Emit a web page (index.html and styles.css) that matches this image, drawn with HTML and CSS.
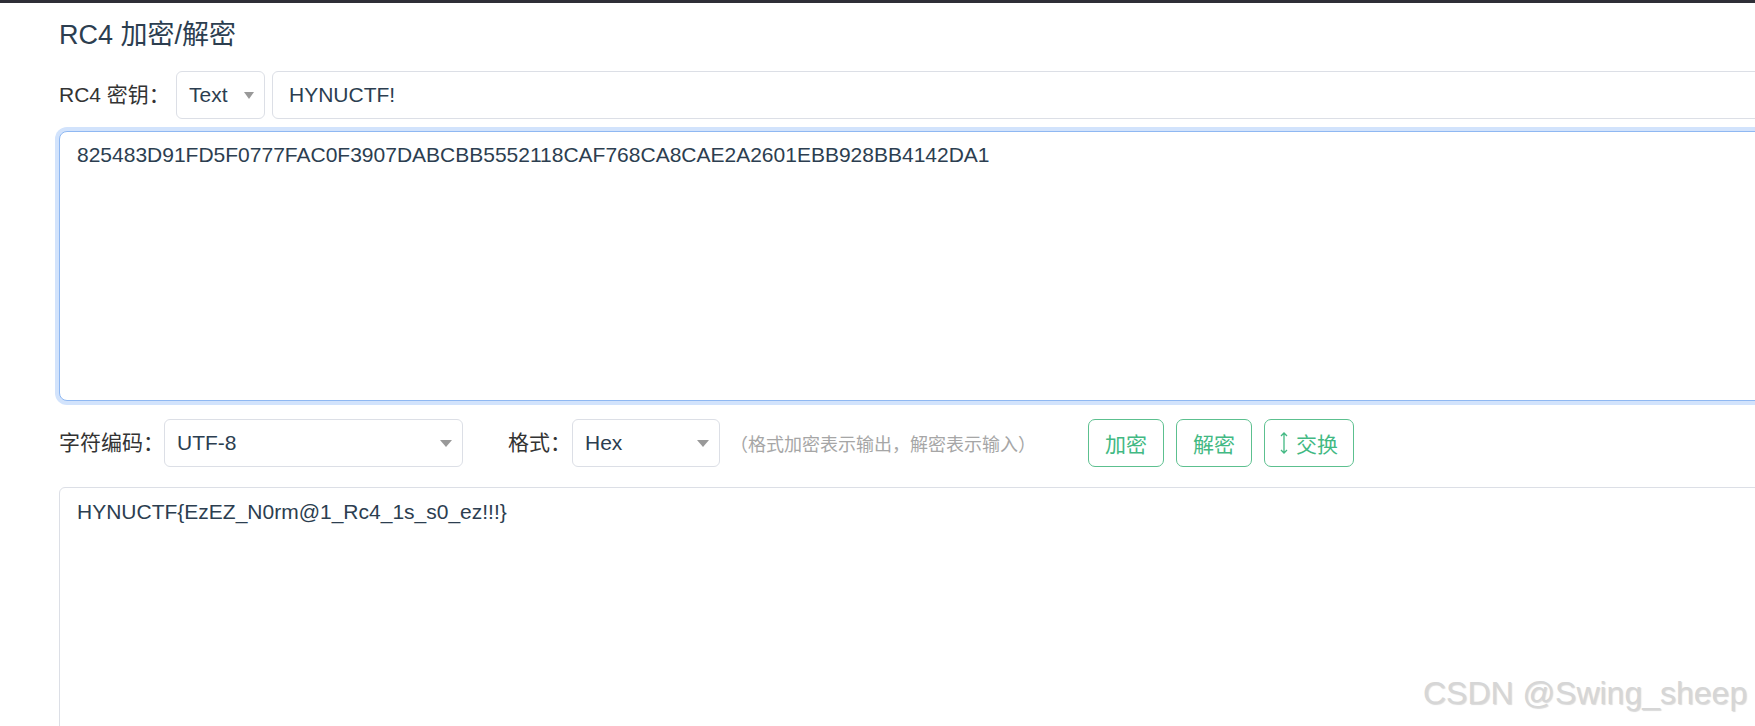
FILE: index.html
```html
<!DOCTYPE html>
<html lang="zh-CN">
<head>
<meta charset="UTF-8">
<meta name="viewport" content="width=device-width, initial-scale=1.0">
<title>RC4 加密/解密</title>
<link rel="stylesheet" href="styles.css">
</head>
<body>

  <div class="tool">
    <h1 class="tool-title">RC4 加密/解密</h1>

    <div class="form-row key-row">
      <span class="field-label label-key">RC4 密钥：</span>
      <div class="select select-type">
        <span>Text</span>
        <span class="caret"></span>
      </div>
      <input class="key-input" type="text" value="HYNUCTF!">
    </div>

    <textarea class="text-box cipher-box">825483D91FD5F0777FAC0F3907DABCBB5552118CAF768CA8CAE2A2601EBB928BB4142DA1</textarea>

    <div class="form-row options-row">
      <span class="field-label label-charset">字符编码：</span>
      <div class="select select-charset">
        <span>UTF-8</span>
        <span class="caret"></span>
      </div>
      <span class="field-label label-format">格式：</span>
      <div class="select select-format">
        <span>Hex</span>
        <span class="caret"></span>
      </div>
      <span class="hint">（格式加密表示输出，解密表示输入）</span>
      <div class="actions">
        <button class="btn">加密</button>
        <button class="btn">解密</button>
        <button class="btn btn-swap">
          <svg class="swap-icon" width="8" height="22" viewBox="0 0 8 22">
            <path d="M4 1 V21 M1 4 L4 1 L7 4 M1 18 L4 21 L7 18" fill="none" stroke="currentColor" stroke-width="1.3"/>
          </svg>
          交换
        </button>
      </div>
    </div>

    <textarea class="text-box plain-box">HYNUCTF{EzEZ_N0rm@1_Rc4_1s_s0_ez!!!}</textarea>
  </div>

  <div class="watermark">CSDN @Swing_sheep</div>

</body>
</html>
```

FILE: styles.css
```css
* {
  box-sizing: border-box;
}

html,
body {
  margin: 0;
}

body {
  position: relative;
  height: 726px;
  overflow: hidden;
  background: #fff;
  border-top: 3px solid #2f2f37;
  color: #2c3e50;
  font-family: "Liberation Sans", "Noto Sans CJK SC", sans-serif;
}

.tool {
  width: 1840px;
  padding-left: 59px;
}

.tool-title {
  margin: 12px 0 0;
  font-size: 27px;
  font-weight: normal;
  line-height: 40px;
}

/* filas de controles */
.form-row {
  display: flex;
  align-items: center;
  height: 48px;
}

.key-row {
  margin-top: 16px;
}

.options-row {
  margin-top: 18px;
}

.field-label {
  font-size: 21px;
  line-height: 48px;
  color: #333;
  white-space: nowrap;
}

.label-key {
  width: 117px;
}

.label-charset {
  width: 105px;
}

.label-format {
  width: 64px;
  margin-left: 45px;
}

.select {
  display: flex;
  align-items: center;
  height: 48px;
  padding: 0 10px 0 12px;
  border: 1px solid #dcdfe6;
  border-radius: 6px;
  font-size: 21px;
  flex-shrink: 0;
}

.select-type {
  width: 89px;
}

.select-charset {
  width: 299px;
}

.select-format {
  width: 148px;
}

.caret {
  margin-left: auto;
  width: 0;
  height: 0;
  border-left: 6px solid transparent;
  border-right: 6px solid transparent;
  border-top: 7px solid #999;
}

.select-type .caret {
  border-left-width: 5px;
  border-right-width: 5px;
}

.key-input {
  flex: 1;
  height: 48px;
  margin-left: 7px;
  padding: 0 16px;
  border: 1px solid #dcdfe6;
  border-radius: 6px;
  outline: none;
  color: #2c3e50;
  font: 21px "Liberation Sans", "Noto Sans CJK SC", sans-serif;
}

.hint {
  margin: 0 52px 0 10px;
  font-size: 18px;
  color: #a6a6a6;
  white-space: nowrap;
}

.actions {
  display: flex;
  gap: 12px;
}

.btn {
  display: flex;
  align-items: center;
  height: 48px;
  padding: 0 16px;
  background: #fff;
  border: 1px solid #5cc08f;
  border-radius: 7px;
  color: #42b983;
  font: 21px "Liberation Sans", "Noto Sans CJK SC", sans-serif;
}

.btn-swap {
  padding: 0 15px;
}

.swap-icon {
  margin-right: 8px;
}

/* areas de texto */
.text-box {
  display: block;
  width: 1781px;
  padding: 7px 17px;
  border: 1px solid #dcdfe6;
  border-radius: 6px;
  outline: none;
  resize: none;
  color: #2c3e50;
  font: 21px/31.5px "Liberation Sans", "Noto Sans CJK SC", sans-serif;
}

.cipher-box {
  height: 270px;
  margin-top: 12px;
  border-color: #8fb8f2;
  border-radius: 8px;
  box-shadow: 0 0 0 4px #d2e3fc;
}

.plain-box {
  height: 320px;
  margin-top: 20px;
  padding-top: 8px;
}

.watermark {
  position: absolute;
  left: 1423px;
  top: 674px;
  font-size: 32px;
  line-height: 32px;
  color: #d6d6d6;
  text-shadow: 1px 1px 1px rgba(0, 0, 0, 0.15);
  white-space: nowrap;
}
```
